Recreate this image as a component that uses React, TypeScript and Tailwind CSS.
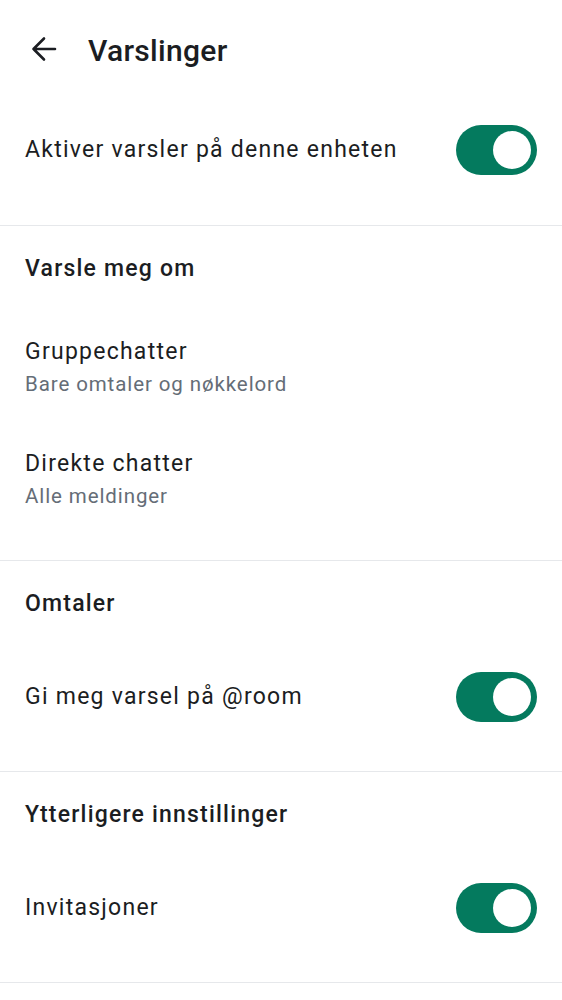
import React from "react";

function Toggle() {
  return (
    <div className="w-[81px] h-[50px] rounded-full bg-[#047a5e] flex items-center justify-end pr-[6px] shrink-0">
      <div className="w-[38px] h-[38px] rounded-full bg-white" />
    </div>
  );
}

function Divider() {
  return <div className="h-px bg-[#e6e8eb]" />;
}

function SectionHeader({ children }: { children: React.ReactNode }) {
  return (
    <div className="h-[86px] flex items-center px-[25px] text-[23px] tracking-[1.2px] font-medium text-[#1b1d22]">
      {children}
    </div>
  );
}

function ToggleRow({ label }: { label: string }) {
  return (
    <div className="h-[100px] flex items-center justify-between pl-[25px] pr-[25px]">
      <span className="text-[23px] tracking-[1.25px] text-[#1b1d22]">{label}</span>
      <Toggle />
    </div>
  );
}

function TwoLine({ title, sub }: { title: string; sub: string }) {
  return (
    <div className="h-[112px] flex flex-col justify-center px-[25px]">
      <span className="text-[23px] tracking-[1.25px] leading-[32px] text-[#1b1d22]">{title}</span>
      <span className="text-[20.5px] tracking-[0.9px] leading-[32px] text-[#656d77]">{sub}</span>
    </div>
  );
}

export default function App() {
  return (
    <div
      className="w-[562px] h-[1000px] bg-white overflow-hidden"
      style={{ fontFamily: "Roboto, 'Noto Sans', sans-serif" }}
    >
      <div className="h-[98px] flex items-center">
        <div className="w-[88px] flex items-center justify-start pl-[31px]">
          <svg width="26" height="26" viewBox="0 0 26 26" fill="none">
            <path
              d="M24 13H2.5M13 2.5L2.5 13L13 23.5"
              stroke="#1b1d22"
              strokeWidth="2.6"
              strokeLinecap="round"
              strokeLinejoin="round"
            />
          </svg>
        </div>
        <h1 className="text-[30px] tracking-[0.3px] font-medium text-[#1b1d22] mt-[2px]">Varslinger</h1>
      </div>
      <div className="h-[2px]" />
      <ToggleRow label="Aktiver varsler på denne enheten" />
      <div className="h-[25px]" />
      <Divider />
      <SectionHeader>Varsle meg om</SectionHeader>
      <TwoLine title="Gruppechatter" sub="Bare omtaler og nøkkelord" />
      <TwoLine title="Direkte chatter" sub="Alle meldinger" />
      <div className="h-[24px]" />
      <Divider />
      <SectionHeader>Omtaler</SectionHeader>
      <ToggleRow label="Gi meg varsel på @room" />
      <div className="h-[24px]" />
      <Divider />
      <SectionHeader>Ytterligere innstillinger</SectionHeader>
      <ToggleRow label="Invitasjoner" />
      <div className="h-[24px]" />
      <Divider />
    </div>
  );
}
